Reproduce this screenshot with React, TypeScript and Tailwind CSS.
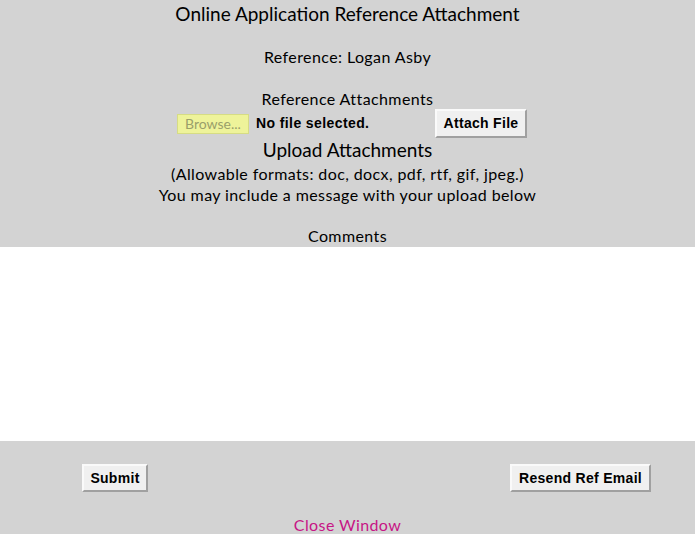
import React from "react";

export default function App() {
  const gothic = { fontFamily: '"Lato", "Noto Sans", sans-serif' };
  const arial = { fontFamily: '"Liberation Sans", Arial, sans-serif' };
  const btn =
    "bg-[#f0f0f0] border-2 border-t-[#fafafa] border-l-[#fafafa] border-r-[#a0a0a0] border-b-[#a0a0a0] text-[14px] font-bold tracking-[0.3px] text-black";
  return (
    <div className="w-[695px] min-h-[534px] bg-[#d3d3d3] text-black flex flex-col" style={gothic}>
      <div className="shrink-0 flex flex-col items-center">
        <div className="h-[28px] leading-[28px] text-[19px]">Online Application Reference Attachment</div>
        <div className="mt-[19px] h-[20px] leading-[20px] text-[16px] tracking-[0.4px]">Reference: Logan Asby</div>
        <div className="mt-[22px] h-[20px] leading-[20px] text-[16px] tracking-[0.4px]">Reference Attachments</div>
        <div className="w-full h-[29px] flex items-center">
          <div className="ml-[177px] w-[72px] h-[20px] bg-[#eef39a] border border-[#d6dc84] text-[#9a9f6a] text-[14px] leading-[18px] text-center">
            Browse...
          </div>
          <div className="ml-[7px] w-[179px] text-[14px] font-bold tracking-[0.4px]" style={arial}>
            No file selected.
          </div>
          <button className={`w-[92px] h-[29px] ${btn}`} style={arial}>
            Attach File
          </button>
        </div>
        <div className="mt-[1px] h-[22px] leading-[22px] text-[19px]">Upload Attachments</div>
        <div className="mt-[2px] h-[21px] leading-[21px] text-[16px] tracking-[0.4px]">
          (Allowable formats: doc, docx, pdf, rtf, gif, jpeg.)
        </div>
        <div className="h-[21px] leading-[21px] text-[16px] tracking-[0.4px]">
          You may include a message with your upload below
        </div>
        <div className="mt-[21px] h-[20px] leading-[20px] text-[16px] tracking-[0.4px]">Comments</div>
      </div>
      <textarea className="shrink-0 mt-[1px] w-full h-[194px] bg-white border-0 outline-none resize-none block" />
      <div className="shrink-0 flex justify-between pl-[82px] pr-[44px] mt-[23px]">
        <button className={`w-[66px] h-[28px] ${btn}`} style={arial}>
          Submit
        </button>
        <button className={`w-[141px] h-[28px] ${btn}`} style={arial}>
          Resend Ref Email
        </button>
      </div>
      <div className="shrink-0 mt-[23px] text-center text-[16px] tracking-[0.4px] leading-[20px] text-[#c71585]">
        Close Window
      </div>
    </div>
  );
}
